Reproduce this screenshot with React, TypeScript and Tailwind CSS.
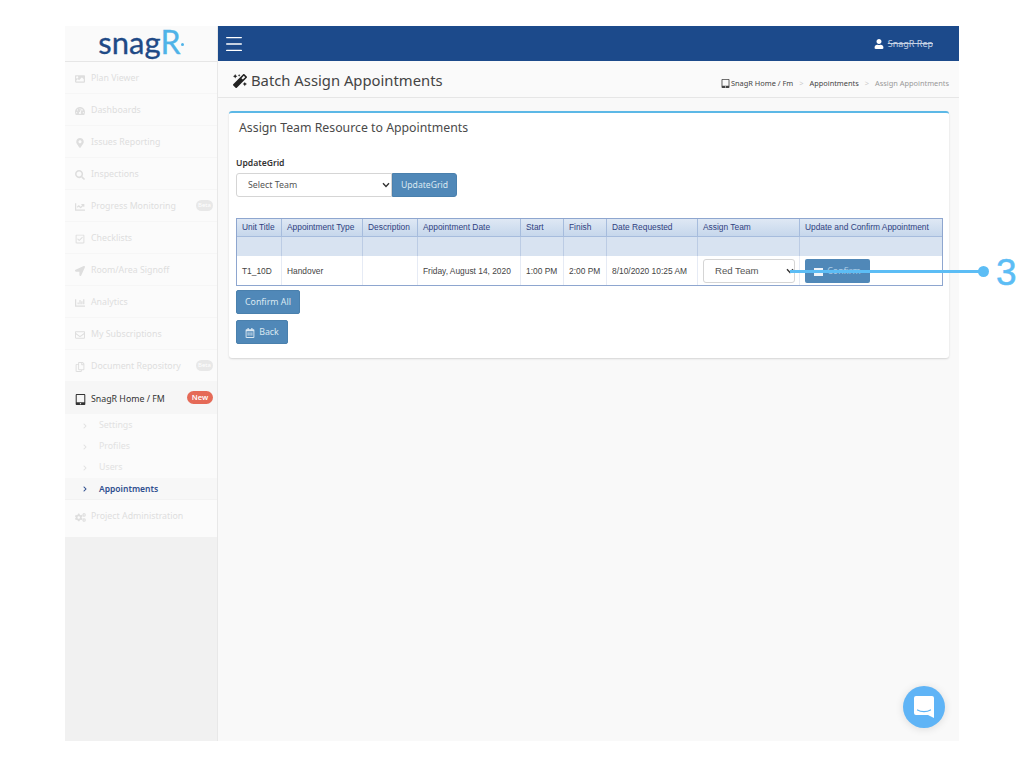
import React from "react";
import { FaImage, FaTachometerAlt, FaMapMarkerAlt, FaSearch, FaChartLine, FaRegCheckSquare, FaLocationArrow, FaChartBar, FaRegEnvelope, FaRegCopy, FaTabletAlt, FaCogs, FaMagic, FaUser, FaRegCalendarAlt, FaChevronRight } from "react-icons/fa";
import { Menu } from "lucide-react";

const top = [
  { label: "Plan Viewer", Icon: FaImage },
  { label: "Dashboards", Icon: FaTachometerAlt },
  { label: "Issues Reporting", Icon: FaMapMarkerAlt },
  { label: "Inspections", Icon: FaSearch },
  { label: "Progress Monitoring", Icon: FaChartLine, beta: true },
  { label: "Checklists", Icon: FaRegCheckSquare },
  { label: "Room/Area Signoff", Icon: FaLocationArrow },
  { label: "Analytics", Icon: FaChartBar },
  { label: "My Subscriptions", Icon: FaRegEnvelope },
  { label: "Document Repository", Icon: FaRegCopy, beta: true },
];

const cols = [45, 81, 55, 103, 43, 43, 91, 102, 143];
const heads = ["Unit Title", "Appointment Type", "Description", "Appointment Date", "Start", "Finish", "Date Requested", "Assign Team", "Update and Confirm Appointment"];
const cells = ["T1_10D", "Handover", "", "Friday, August 14, 2020", "1:00 PM", "2:00 PM", "8/10/2020 10:25 AM"];

function Chevron({ className }: { className: string }) {
  return (
    <svg width="8" height="6" viewBox="0 0 8 6" className={`absolute pointer-events-none ${className}`}>
      <path d="M1 1.2 4 4.4 7 1.2" fill="none" stroke="#333" strokeWidth="1.4" />
    </svg>
  );
}

function SideItem({ label, Icon, beta }: { label: string; Icon: any; beta?: boolean }) {
  return (
    <div className="h-8 pt-[3px] flex items-center pl-[7px] border-b border-[#f6f6f6] text-[#dedede] relative">
      <span className="w-4 flex justify-center"><Icon size={10} /></span>
      <span className="ml-[3px] text-[8.8px] whitespace-nowrap">{label}</span>
      {beta && <span className="absolute right-[4px] top-[10px] w-[17px] h-[11px] rounded-full bg-[#e8e8e8] text-white text-[6px] leading-[11px] text-center">Beta</span>}
    </div>
  );
}

function SubItem({ label, active }: { label: string; active?: boolean }) {
  return (
    <div className={`h-[21px] pt-[2px] flex items-center pl-[17px] ${active ? "bg-[#f7f7f7] text-[#2f4f8f] font-semibold text-[8.5px]" : "text-[#e2e2e2] text-[8.8px]"}`}>
      <FaChevronRight size={6} />
      <span className="ml-[11px]">{label}</span>
    </div>
  );
}

export default function App() {
  return (
    <div className="relative w-[1024px] h-[768px] bg-white overflow-hidden font-['Noto_Sans',sans-serif]">
      <div className="pt-[26px] pl-[65px] w-[960px] h-[742px]">
        <div className="flex w-[894px] h-[715px] bg-[#f9f9f9]">
          <aside className="w-[153px] shrink-0 bg-[#f1f1f1] border-r border-[#e8e8e8] flex flex-col">
            <div className="h-9 bg-[#fafafa] border-b border-[#e6e6e6] flex items-end justify-center font-['Lato',sans-serif] text-[31px] leading-none pb-[3px] text-[#1f4a86] [-webkit-text-stroke:0.3px_#1f4a86]">
              snag<span className="text-[#4fb3e8] text-[32px] leading-none [-webkit-text-stroke:0.3px_#4fb3e8]">R</span>
              <span className="w-[3px] h-[3px] rounded-full bg-[#4fb3e8] mb-[12px]"></span>
            </div>
            <div className="bg-[#fbfbfb]">
              {top.map((t) => <SideItem key={t.label} {...t} />)}
              <div className="h-8 pt-[3px] flex items-center pl-[7px] bg-[#f6f6f6] text-[#333] relative">
                <span className="w-4 flex justify-center"><FaTabletAlt size={11} /></span>
                <span className="ml-[3px] text-[8.8px]">SnagR Home / FM</span>
                <span className="absolute right-[4px] top-[9px] w-[26px] h-[13px] rounded-full bg-[#e56a57] text-white text-[7.5px] leading-[13px] text-center font-semibold">New</span>
              </div>
              <div className="pt-[0.5px]">
                <SubItem label="Settings" />
                <SubItem label="Profiles" />
                <SubItem label="Users" />
                <SubItem label="Appointments" active />
              </div>
              <div className="h-[38px] flex items-center pl-[7px] border-t border-[#f2f2f2] text-[#dedede] pb-[2px]">
                <span className="w-4 flex justify-center"><FaCogs size={11} /></span>
                <span className="ml-[3px] text-[8.8px]">Project Administration</span>
              </div>
            </div>
          </aside>
          <main className="flex-1 flex flex-col min-w-0">
            <header className="h-[35px] bg-[#1c4a8b] flex items-center justify-between pl-[5px] pr-[26px] text-white">
              <Menu size={22} strokeWidth={1.4} />
              <div className="flex items-center gap-[4px] text-[9px] text-[#c6d2e4] line-through">
                <FaUser size={10} className="text-white" />
                <span>SnagR Rep</span>
              </div>
            </header>
            <div className="h-[37px] pt-[3px] bg-[#fafafa] border-b border-[#e6e6e6] flex items-center justify-between pl-[15px] pr-[10px]">
              <h1 className="flex items-center gap-[4px] text-[14.8px] text-[#444]">
                <FaMagic size={14} className="text-[#222]" />
                Batch Assign Appointments
              </h1>
              <div className="mt-[7px] flex items-center text-[7.4px] text-[#444]">
                <FaTabletAlt size={9} />
                <span className="ml-[1px]">SnagR Home / Fm</span>
                <span className="mx-[6px] text-[#ccc]">&gt;</span>
                <span>Appointments</span>
                <span className="mx-[6px] text-[#ccc]">&gt;</span>
                <span className="text-[#999]">Assign Appointments</span>
              </div>
            </div>
            <div className="pt-[13px] pl-[11px] pr-[10px]">
              <section className="h-[247px] bg-white border-t-2 border-[#5cb8e6] rounded-[3px] shadow-[0_1px_2px_rgba(0,0,0,0.15)] px-[7px]">
                <h2 className="pl-[3px] pt-[6px] text-[12.3px] leading-[18px] text-[#4a4a4a]">Assign Team Resource to Appointments</h2>
                <div className="mt-[20px] text-[8.6px] font-semibold leading-[12px] text-[#333]">UpdateGrid</div>
                <div className="mt-[4px] flex">
                  <div className="relative">
                    <select className="block appearance-none w-[156px] h-[24px] pl-[11px] pt-[2px] text-[8.8px] text-[#555] bg-white border border-[#d5d5d5] rounded-l-[3px]" defaultValue="Select Team">
                      <option>Select Team</option>
                    </select>
                    <Chevron className="right-[2px] top-[9px]" />
                  </div>
                  <button className="w-[65px] h-[24px] pt-[1px] bg-[#5088b8] border border-[#4a80ad] rounded-r-[3px] text-[8.6px] text-[#dbe8f2]">UpdateGrid</button>
                </div>
                <table className="mt-[21px] w-[706px] table-fixed border-collapse outline outline-[#8ea6cf] -outline-offset-1 font-['Liberation_Sans',sans-serif] text-[8.4px]">
                  <colgroup>{cols.map((c, i) => <col key={i} style={{ width: c }} />)}</colgroup>
                  <thead>
                    <tr className="h-[18px] bg-gradient-to-b from-[#e0e9f5] to-[#c6d7ec]">
                      {heads.map((h) => <th key={h} className="border-x border-b border-[#a6bcdd] px-[5px] pt-[1px] font-normal text-left text-[#2f3f7f] whitespace-nowrap">{h}</th>)}
                    </tr>
                    <tr className="h-[20px] bg-[#d8e3f1]">
                      {heads.map((h) => <th key={h} className="border-x border-[#bccce4]"></th>)}
                    </tr>
                  </thead>
                  <tbody>
                    <tr className="h-[30px]">
                      {cells.map((c, i) => <td key={i} className="border-x border-[#e6ebf5] px-[5px] text-[#444] whitespace-nowrap">{c}</td>)}
                      <td className="border-x border-[#e6ebf5] px-[5px]">
                        <div className="relative w-[92px]">
                          <select className="block appearance-none w-[92px] h-[24px] pl-[11px] text-[9.6px] text-[#555] bg-white border border-[#d5d5d5] rounded-[3px]" defaultValue="Red Team">
                            <option>Red Team</option>
                          </select>
                          <Chevron className="right-[1px] top-[9px]" />
                        </div>
                      </td>
                      <td className="border-x border-[#e6ebf5] px-[5px]">
                        <button className="w-[65px] h-[24px] pt-[1px] flex items-center justify-center gap-[4px] bg-[#5088b8] rounded-[2px] text-[8.8px] text-[#a9cbe6] font-['Noto_Sans',sans-serif]">
                          <span className="w-[9px] h-[8px] bg-white/90"></span>
                          Confirm
                        </button>
                      </td>
                    </tr>
                  </tbody>
                </table>
                <button className="block mt-[4px] pt-[1px] w-[64px] h-[24px] bg-[#5088b8] border border-[#4a80ad] rounded-[2px] text-[8.8px] text-[#dbe8f2]">Confirm All</button>
                <button className="mt-[6px] pt-[2px] w-[52px] h-[24px] flex items-center justify-center gap-[4px] bg-[#5088b8] border border-[#4a80ad] rounded-[2px] text-[8.8px] text-[#dbe8f2]">
                  <FaRegCalendarAlt size={10} />
                  Back
                </button>
              </section>
            </div>
          </main>
        </div>
      </div>

      <div className="absolute left-[790px] top-[270px] w-[192px] h-[3px] bg-[#5cbdf5]"></div>
      <div className="absolute left-[978px] top-[266px] w-[11px] h-[11px] rounded-full bg-[#5cbdf5]"></div>
      <div className="absolute left-[996px] top-[252px] text-[37px] leading-[42px] text-[#5cbdf5] [-webkit-text-stroke:0.5px_#5cbdf5] font-['Liberation_Sans',sans-serif]">3</div>

      <div className="absolute left-[903px] top-[686px] w-[42px] h-[42px] rounded-full bg-[#5fb4f6] flex items-center justify-center shadow-[0_1px_8px_rgba(0,0,0,0.12)]">
        <svg width="22" height="24" viewBox="0 0 22 24">
          <path d="M3 1h16a2 2 0 0 1 2 2v20l-6-3H3a2 2 0 0 1-2-2V3a2 2 0 0 1 2-2z" fill="#fff" />
          <path d="M4.500 15c3.500 2.200 9.500 2.200 13 0" fill="none" stroke="#5fb4f6" strokeWidth="1.2" strokeLinecap="round" />
        </svg>
      </div>
    </div>
  );
}
